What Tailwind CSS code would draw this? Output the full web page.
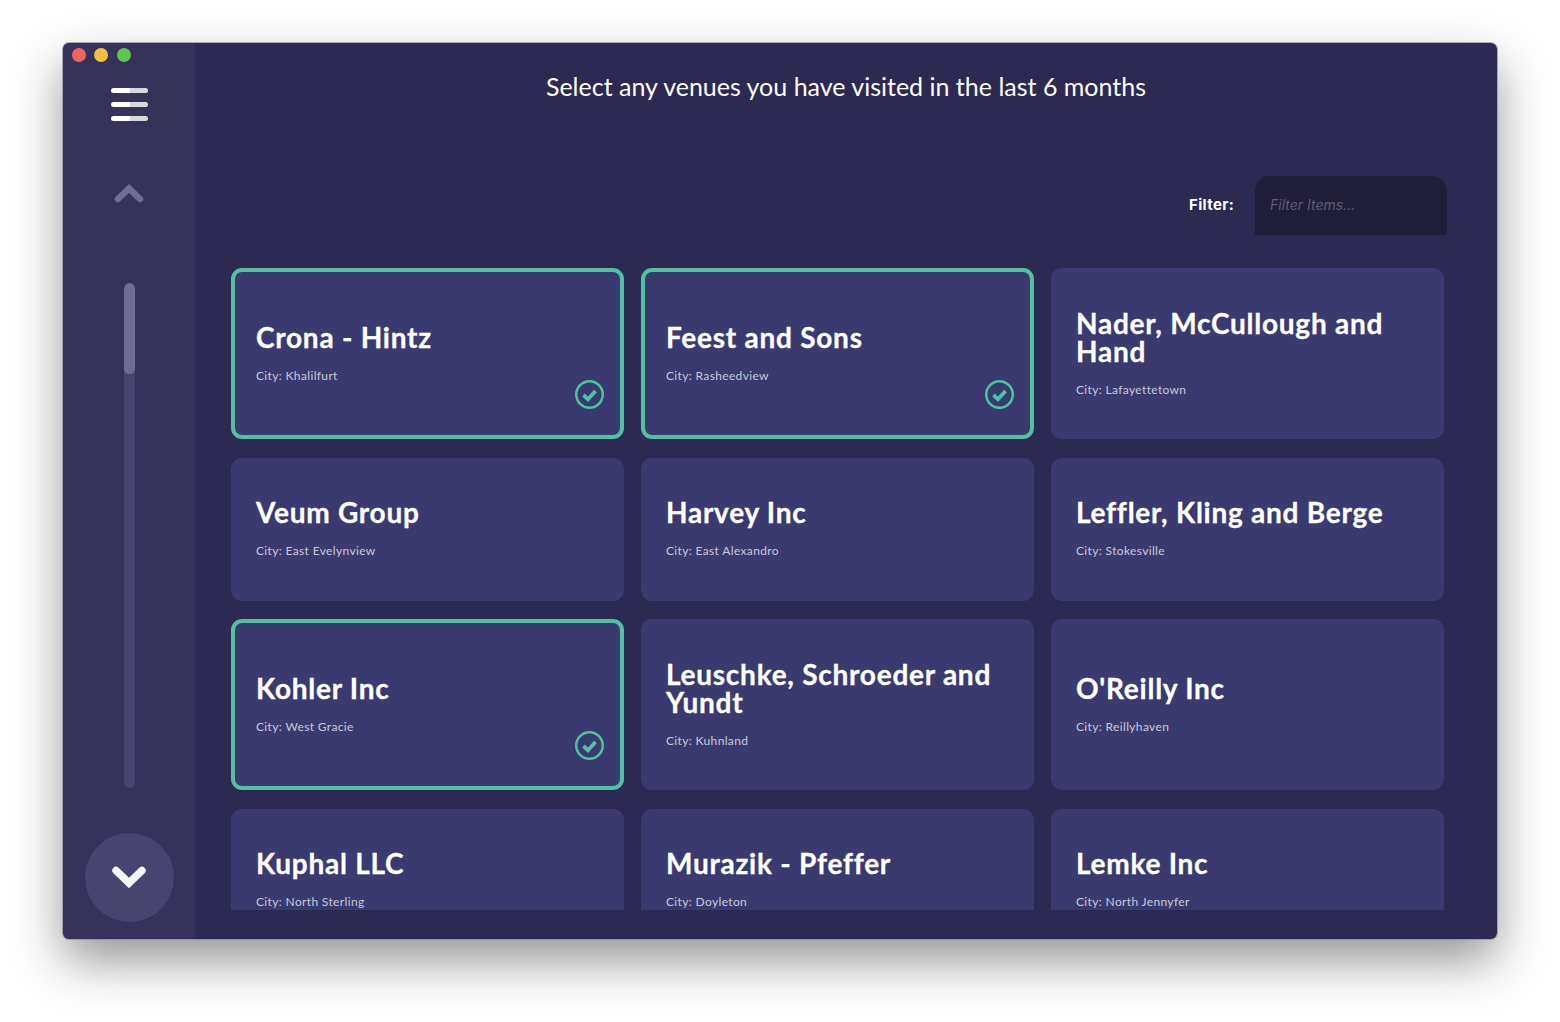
<!DOCTYPE html>
<html lang="en">
<head>
    <meta charset="UTF-8">
    <title>Venues</title>
    <script src="https://cdn.jsdelivr.net/npm/@tailwindcss/browser@4"></script>
</head>
<body class="bg-white w-[1560px] h-[1022px] overflow-hidden font-['Lato',sans-serif]">
    <div class="ml-[63px] mt-[43px] pt-0 w-[1434px] h-[896px] relative flex rounded-[6px] overflow-hidden bg-[#2c2953] outline outline-[#8c8a9c]/70 shadow-[0_22px_50px_rgba(0,0,0,0.42)]">
        <!-- traffic lights -->
        <div class="absolute left-[8.5px] top-[5px] flex gap-[8.5px]">
            <span class="w-[14px] h-[14px] rounded-full bg-[#f2645a]"></span>
            <span class="w-[14px] h-[14px] rounded-full bg-[#f6bd41]"></span>
            <span class="w-[14px] h-[14px] rounded-full bg-[#5ec452]"></span>
        </div>

        <!-- sidebar -->
        <aside class="w-[132px] shrink-0 bg-[#36325a] flex flex-col items-center pt-[45px]">
            <div class="flex flex-col gap-[9px] w-[37px]">
                <span class="h-[5px] rounded-full bg-[linear-gradient(100deg,#fff_50%,#d6d9de_52%)]"></span>
                <span class="h-[5px] rounded-full bg-[linear-gradient(100deg,#fff_50%,#d6d9de_52%)]"></span>
                <span class="h-[5px] rounded-full bg-[linear-gradient(100deg,#fff_50%,#d6d9de_52%)]"></span>
            </div>
            <svg class="mt-[62px] w-[30px] h-[20px]" viewBox="0 0 30 20" fill="none" stroke="#716d92" stroke-width="6.5" stroke-linecap="round" stroke-linejoin="miter"><path d="M4 16 15 5.5 26 16"/></svg>
            <div class="mt-[80px] w-[11px] h-[505px] rounded-full bg-[#48446f] overflow-hidden">
                <div class="h-[91px] rounded-full bg-[#716d92]"></div>
            </div>
            <button class="mt-[45px] w-[89px] h-[89px] rounded-full bg-[#484470] flex items-center justify-center">
                <svg class="w-[36px] h-[26px]" viewBox="0 0 36 26" fill="none" stroke="#f4f7f9" stroke-width="7.5" stroke-linecap="round" stroke-linejoin="miter"><path d="M5 5.5 18 18 31 5.5"/></svg>
            </button>
        </aside>

        <!-- main -->
        <main class="flex-1 min-w-0 relative">
            <h1 class="pt-[28px] text-center text-white text-[25px] leading-[30px] font-normal">Select any venues you have visited in the last 6 months</h1>

            <div class="mt-[75px] pr-[50px] flex justify-end items-center gap-[21px]">
                <label class="text-white text-[15px] font-bold tracking-[0.35px] font-['Inter',sans-serif]">Filter:</label>
                <input class="w-[192px] h-[59px] rounded-t-[15px] bg-[#211e3a] px-[15px] pb-[2px] text-[14px] italic font-['Inter',sans-serif] placeholder:text-[#5f5c75] outline-none" placeholder="Filter Items...">
            </div>

            <div class="mt-[33px] ml-[36px] w-[1213px] h-[642px] overflow-hidden grid grid-cols-3 gap-x-[17px] gap-y-[18.5px] grid-rows-[171px_143px_171px_143px]">
                <div class="relative rounded-[11px] bg-[#3b3a70] border-4 border-[#4fc3a1] px-[21px] pb-[1px] flex flex-col justify-center">
                    <h2 class="text-white text-[28px] leading-[28px] font-bold tracking-[0.75px] [-webkit-text-stroke:0.3px_white]">Crona - Hintz</h2>
                    <p class="mt-[17px] text-[#c9c8da] text-[12px] leading-4 tracking-[0.35px]">City: Khalilfurt</p>
                    <svg class="absolute right-[16px] bottom-[26px] w-[29px] h-[29px]" viewBox="0 0 29 29" fill="none" stroke="#4fc3a1"><circle cx="14.5" cy="14.5" r="13.25" stroke-width="2.5"/><path d="M8.5 15l4.5 4.2 7.5-8.2" stroke-width="3.8"/></svg>
                </div>
                <div class="relative rounded-[11px] bg-[#3b3a70] border-4 border-[#4fc3a1] px-[21px] pb-[1px] flex flex-col justify-center">
                    <h2 class="text-white text-[28px] leading-[28px] font-bold tracking-[0.75px] [-webkit-text-stroke:0.3px_white]">Feest and Sons</h2>
                    <p class="mt-[17px] text-[#c9c8da] text-[12px] leading-4 tracking-[0.35px]">City: Rasheedview</p>
                    <svg class="absolute right-[16px] bottom-[26px] w-[29px] h-[29px]" viewBox="0 0 29 29" fill="none" stroke="#4fc3a1"><circle cx="14.5" cy="14.5" r="13.25" stroke-width="2.5"/><path d="M8.5 15l4.5 4.2 7.5-8.2" stroke-width="3.8"/></svg>
                </div>
                <div class="rounded-[11px] bg-[#3b3a70] px-[25px] pb-[1px] flex flex-col justify-center">
                    <h2 class="text-white text-[28px] leading-[28px] font-bold tracking-[0.75px] [-webkit-text-stroke:0.3px_white]">Nader, McCullough and Hand</h2>
                    <p class="mt-[17px] text-[#c9c8da] text-[12px] leading-4 tracking-[0.35px]">City: Lafayettetown</p>
                </div>

                <div class="rounded-[11px] bg-[#3b3a70] px-[25px] pb-[1px] flex flex-col justify-center">
                    <h2 class="text-white text-[28px] leading-[28px] font-bold tracking-[0.75px] [-webkit-text-stroke:0.3px_white]">Veum Group</h2>
                    <p class="mt-[17px] text-[#c9c8da] text-[12px] leading-4 tracking-[0.35px]">City: East Evelynview</p>
                </div>
                <div class="rounded-[11px] bg-[#3b3a70] px-[25px] pb-[1px] flex flex-col justify-center">
                    <h2 class="text-white text-[28px] leading-[28px] font-bold tracking-[0.75px] [-webkit-text-stroke:0.3px_white]">Harvey Inc</h2>
                    <p class="mt-[17px] text-[#c9c8da] text-[12px] leading-4 tracking-[0.35px]">City: East Alexandro</p>
                </div>
                <div class="rounded-[11px] bg-[#3b3a70] px-[25px] pb-[1px] flex flex-col justify-center">
                    <h2 class="text-white text-[28px] leading-[28px] font-bold tracking-[0.75px] [-webkit-text-stroke:0.3px_white]">Leffler, Kling and Berge</h2>
                    <p class="mt-[17px] text-[#c9c8da] text-[12px] leading-4 tracking-[0.35px]">City: Stokesville</p>
                </div>

                <div class="relative rounded-[11px] bg-[#3b3a70] border-4 border-[#4fc3a1] px-[21px] pb-[1px] flex flex-col justify-center">
                    <h2 class="text-white text-[28px] leading-[28px] font-bold tracking-[0.75px] [-webkit-text-stroke:0.3px_white]">Kohler Inc</h2>
                    <p class="mt-[17px] text-[#c9c8da] text-[12px] leading-4 tracking-[0.35px]">City: West Gracie</p>
                    <svg class="absolute right-[16px] bottom-[26px] w-[29px] h-[29px]" viewBox="0 0 29 29" fill="none" stroke="#4fc3a1"><circle cx="14.5" cy="14.5" r="13.25" stroke-width="2.5"/><path d="M8.5 15l4.5 4.2 7.5-8.2" stroke-width="3.8"/></svg>
                </div>
                <div class="rounded-[11px] bg-[#3b3a70] px-[25px] pb-[1px] flex flex-col justify-center">
                    <h2 class="text-white text-[28px] leading-[28px] font-bold tracking-[0.75px] [-webkit-text-stroke:0.3px_white]">Leuschke, Schroeder and Yundt</h2>
                    <p class="mt-[17px] text-[#c9c8da] text-[12px] leading-4 tracking-[0.35px]">City: Kuhnland</p>
                </div>
                <div class="rounded-[11px] bg-[#3b3a70] px-[25px] pb-[1px] flex flex-col justify-center">
                    <h2 class="text-white text-[28px] leading-[28px] font-bold tracking-[0.75px] [-webkit-text-stroke:0.3px_white]">O'Reilly Inc</h2>
                    <p class="mt-[17px] text-[#c9c8da] text-[12px] leading-4 tracking-[0.35px]">City: Reillyhaven</p>
                </div>

                <div class="rounded-[11px] bg-[#3b3a70] px-[25px] pb-[1px] flex flex-col justify-center">
                    <h2 class="text-white text-[28px] leading-[28px] font-bold tracking-[0.75px] [-webkit-text-stroke:0.3px_white]">Kuphal LLC</h2>
                    <p class="mt-[17px] text-[#c9c8da] text-[12px] leading-4 tracking-[0.35px]">City: North Sterling</p>
                </div>
                <div class="rounded-[11px] bg-[#3b3a70] px-[25px] pb-[1px] flex flex-col justify-center">
                    <h2 class="text-white text-[28px] leading-[28px] font-bold tracking-[0.75px] [-webkit-text-stroke:0.3px_white]">Murazik - Pfeffer</h2>
                    <p class="mt-[17px] text-[#c9c8da] text-[12px] leading-4 tracking-[0.35px]">City: Doyleton</p>
                </div>
                <div class="rounded-[11px] bg-[#3b3a70] px-[25px] pb-[1px] flex flex-col justify-center">
                    <h2 class="text-white text-[28px] leading-[28px] font-bold tracking-[0.75px] [-webkit-text-stroke:0.3px_white]">Lemke Inc</h2>
                    <p class="mt-[17px] text-[#c9c8da] text-[12px] leading-4 tracking-[0.35px]">City: North Jennyfer</p>
                </div>
            </div>
        </main>
    </div>
</body>
</html>
